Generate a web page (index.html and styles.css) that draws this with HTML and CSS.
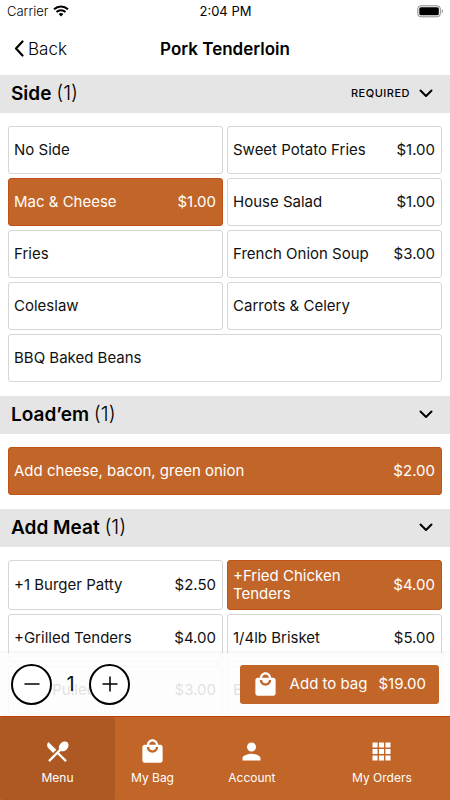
FILE: index.html
```html
<!DOCTYPE html>
<html lang="en">
<head>
<meta charset="utf-8">
<meta name="viewport" content="width=device-width, initial-scale=1">
<title>Pork Tenderloin</title>
<link rel="stylesheet" href="styles.css">
</head>
<body>
<svg class="sprite" aria-hidden="true">
  <symbol id="chevron" viewBox="0 0 14 9"><path d="M1.500 1.500 7 7l5.500-5.500" fill="none" stroke="currentColor" stroke-width="2" stroke-linecap="round" stroke-linejoin="round"/></symbol>
  <symbol id="bag" viewBox="0 0 24 24"><path d="M19 6h-2c0-2.760-2.240-5-5-5S7 3.240 7 6H5c-1.100 0-1.990.9-1.990 2L3 20c0 1.100.9 2 2 2h14c1.100 0 2-.9 2-2V8c0-1.100-.9-2-2-2zm-7-3c1.660 0 3 1.340 3 3H9c0-1.660 1.340-3 3-3zm0 10c-2.760 0-5-2.240-5-5h2c0 1.660 1.340 3 3 3s3-1.340 3-3h2c0 2.760-2.240 5-5 5z" fill="currentColor"/></symbol>
</svg>
<div class="app">
  <div class="status">
    <span class="carrier">Carrier
      <svg width="16" height="12" viewBox="0 0 16 12" aria-hidden="true"><g fill="none" stroke="#000" stroke-width="2"><path d="M1 4.200a10.200 10.200 0 0 1 14 0"/><path d="M3.500 7a6.500 6.500 0 0 1 9 0"/></g><path d="M8 11.500 5.600 9.100a3.500 3.500 0 0 1 4.800 0z"/></svg>
    </span>
    <span class="clock">2:04 PM</span>
    <svg class="battery" width="27" height="13" viewBox="0 0 27 13" aria-hidden="true"><rect x=".8" y=".8" width="22.500" height="11" rx="3" fill="none" stroke="#888"/><rect x="2.300" y="2.300" width="19.500" height="8" rx="1.500"/><path d="M24.800 4.300c1.600.7 1.600 3.300 0 4z" fill="#888"/></svg>
  </div>
  <header class="navbar">
    <button class="back" type="button"><svg width="10" height="17" viewBox="0 0 10 17" aria-hidden="true"><path d="M8.500 1.500 2 8.500l6.500 7" fill="none" stroke="#000" stroke-width="2.200" stroke-linecap="round" stroke-linejoin="round"/></svg>Back</button>
    <h1>Pork Tenderloin</h1>
  </header>
  <div class="content">
    <main class="scroll">
      <section>
        <button class="heading" type="button"><span class="name">Side <span class="count">(1)</span></span><span class="required">REQUIRED</span><svg class="chevron" aria-hidden="true"><use href="#chevron"/></svg></button>
        <div class="options">
          <label class="option"><input type="radio" name="side"><span>No Side</span></label>
          <label class="option"><input type="radio" name="side"><span>Sweet Potato Fries</span><span>$1.00</span></label>
          <label class="option"><input type="radio" name="side" checked><span>Mac &amp; Cheese</span><span>$1.00</span></label>
          <label class="option"><input type="radio" name="side"><span>House Salad</span><span>$1.00</span></label>
          <label class="option"><input type="radio" name="side"><span>Fries</span></label>
          <label class="option"><input type="radio" name="side"><span>French Onion Soup</span><span>$3.00</span></label>
          <label class="option"><input type="radio" name="side"><span>Coleslaw</span></label>
          <label class="option"><input type="radio" name="side"><span>Carrots &amp; Celery</span></label>
          <label class="option wide"><input type="radio" name="side"><span>BBQ Baked Beans</span></label>
        </div>
      </section>
      <section>
        <button class="heading" type="button"><span class="name">Load’em <span class="count">(1)</span></span><svg class="chevron" aria-hidden="true"><use href="#chevron"/></svg></button>
        <div class="options">
          <label class="option wide"><input type="checkbox" checked><span>Add cheese, bacon, green onion</span><span>$2.00</span></label>
        </div>
      </section>
      <section>
        <button class="heading" type="button"><span class="name">Add Meat <span class="count">(1)</span></span><svg class="chevron" aria-hidden="true"><use href="#chevron"/></svg></button>
        <div class="options">
          <label class="option"><input type="checkbox"><span>+1 Burger Patty</span><span>$2.50</span></label>
          <label class="option"><input type="checkbox" checked><span>+Fried Chicken Tenders</span><span>$4.00</span></label>
          <label class="option"><input type="checkbox"><span>+Grilled Tenders</span><span>$4.00</span></label>
          <label class="option"><input type="checkbox"><span>1/4lb Brisket</span><span>$5.00</span></label>
          <label class="option"><input type="checkbox"><span>1/4lb Pulled</span><span>$3.00</span></label>
          <label class="option"><input type="checkbox"><span>Bacon</span></label>
        </div>
      </section>
    </main>
    <div class="order">
      <button class="round" type="button" aria-label="Decrease quantity"><svg width="18" height="18" viewBox="0 0 18 18" aria-hidden="true"><path d="M1.500 9h15" stroke="#000" stroke-width="1.500"/></svg></button>
      <output class="quantity">1</output>
      <button class="round" type="button" aria-label="Increase quantity"><svg width="18" height="18" viewBox="0 0 18 18" aria-hidden="true"><path d="M1.500 9h15M9 1.500v15" stroke="#000" stroke-width="1.500"/></svg></button>
      <button class="add" type="button"><svg width="27" height="27" aria-hidden="true"><use href="#bag"/></svg><span>Add to bag</span><span>$19.00</span></button>
    </div>
  </div>
  <nav class="tabs">
    <a class="tab active" href="#menu"><svg width="27" height="27" viewBox="0 0 24 24" aria-hidden="true"><path d="M8.100 13.340l2.830-2.830L3.910 3.500a4.008 4.008 0 0 0 0 5.660l4.190 4.180zm6.780-1.810c1.530.71 3.680.21 5.270-1.380 1.910-1.910 2.280-4.650.81-6.120-1.460-1.460-4.200-1.100-6.120.81-1.590 1.590-2.090 3.740-1.380 5.270L3.700 19.870l1.410 1.410L12 14.410l6.880 6.880 1.410-1.410L13.410 13l1.470-1.470z" fill="currentColor"/></svg>Menu</a>
    <a class="tab" href="#bag"><svg width="27" height="27" aria-hidden="true"><use href="#bag"/></svg>My Bag</a>
    <a class="tab" href="#account"><svg width="27" height="27" viewBox="0 0 24 24" aria-hidden="true"><path d="M12 12c2.210 0 4-1.790 4-4s-1.790-4-4-4-4 1.790-4 4 1.790 4 4 4zm0 2c-2.670 0-8 1.340-8 4v2h16v-2c0-2.660-5.330-4-8-4z" fill="currentColor"/></svg>Account</a>
    <a class="tab" href="#orders"><svg width="27" height="27" viewBox="0 0 24 24" aria-hidden="true"><path d="M4 4h4.500v4.500H4zM9.750 4h4.500v4.500h-4.500zM15.500 4H20v4.500h-4.500zM4 9.750h4.500v4.500H4zM9.750 9.750h4.500v4.500h-4.500zM15.500 9.750H20v4.500h-4.500zM4 15.500h4.500V20H4zM9.750 15.500h4.500V20h-4.500zM15.500 15.500H20V20h-4.500z" fill="currentColor"/></svg>My Orders</a>
  </nav>
</div>
</body>
</html>
```
FILE: styles.css
```css
* { box-sizing: border-box; }
body { margin: 0; background: #fff; color: #111; font-family: Inter, "Liberation Sans", sans-serif; font-size: 15px; line-height: 18px; }
button { border: 0; padding: 0; background: none; color: inherit; font: inherit; cursor: pointer; }
svg { display: block; flex: none; }
.sprite { position: absolute; width: 0; height: 0; }
.app { display: flex; flex-direction: column; height: 100vh; }

.status { display: grid; grid-template-columns: 1fr auto 1fr; align-items: center; height: 22px; padding: 0 6px 0 7px; font-size: 13px; color: #000; }
.carrier { display: flex; align-items: center; gap: 5px; font-weight: 300; }
.battery { justify-self: end; }

.navbar { display: grid; grid-template-columns: 1fr auto 1fr; align-items: center; height: 53px; padding: 0 14px; color: #000; }
.back { display: flex; align-items: center; gap: 4px; font-size: 17px; font-weight: 300; }
h1 { margin: 0; font-size: 17px; font-weight: 600; }

.content { position: relative; flex: 1; min-height: 0; }
.scroll { height: 100%; overflow-y: auto; scrollbar-width: none; }
.heading { display: flex; align-items: center; width: 100%; height: 38px; padding: 0 17px 2px 11px; background: #e5e5e5; color: #000; text-align: left; }
.name { flex: 1; font-size: 19px; font-weight: 600; }
.count { font-size: 20px; font-weight: 300; }
.required { margin-right: 9px; font-size: 11px; font-weight: 500; letter-spacing: 0.5px; }
.chevron { width: 14px; height: 9px; }

.options { display: grid; grid-template-columns: 1fr 1fr; gap: 4px; padding: 13px 8px 14px; font-weight: 370; }
.option { position: relative; display: flex; align-items: center; justify-content: space-between; gap: 8px; min-height: 48px; padding: 6px 6px 6px 5px; border: 1px solid #d6d6d6; border-radius: 3px; cursor: pointer; }
.option input { position: absolute; opacity: 0; margin: 0; }
.option:has(input:checked) { background: #c26528; border-color: #c05418; color: #fff; }
.wide { grid-column: 1 / -1; }

.order { position: absolute; right: 0; bottom: 0; left: 0; display: flex; align-items: center; height: 63px; padding: 0 11px 1px; background: rgba(253, 253, 253, 0.88); box-shadow: 0 -1px 3px rgba(0, 0, 0, 0.06); }
.round { display: grid; place-items: center; width: 41px; height: 41px; border: 2px solid #000; border-radius: 50%; background: #fff; }
.quantity { width: 37px; text-align: center; font-size: 20px; }
.add { display: flex; align-items: center; gap: 11px; height: 39px; margin-left: auto; padding: 0 13px 0 12px; border-radius: 3px; background: #c26528; color: #fff; }

.tabs { display: grid; grid-template-columns: 115px 75px 10fr 11fr; height: 84px; border-top: 1px solid #bd4310; background: #c26528; }
.tab { display: flex; flex-direction: column; align-items: center; justify-content: center; gap: 5px; padding-top: 6px; color: #fff; font-size: 12px; line-height: 16px; text-decoration: none; }
.active { border-radius: 3px; background: #ae5823; }
```
